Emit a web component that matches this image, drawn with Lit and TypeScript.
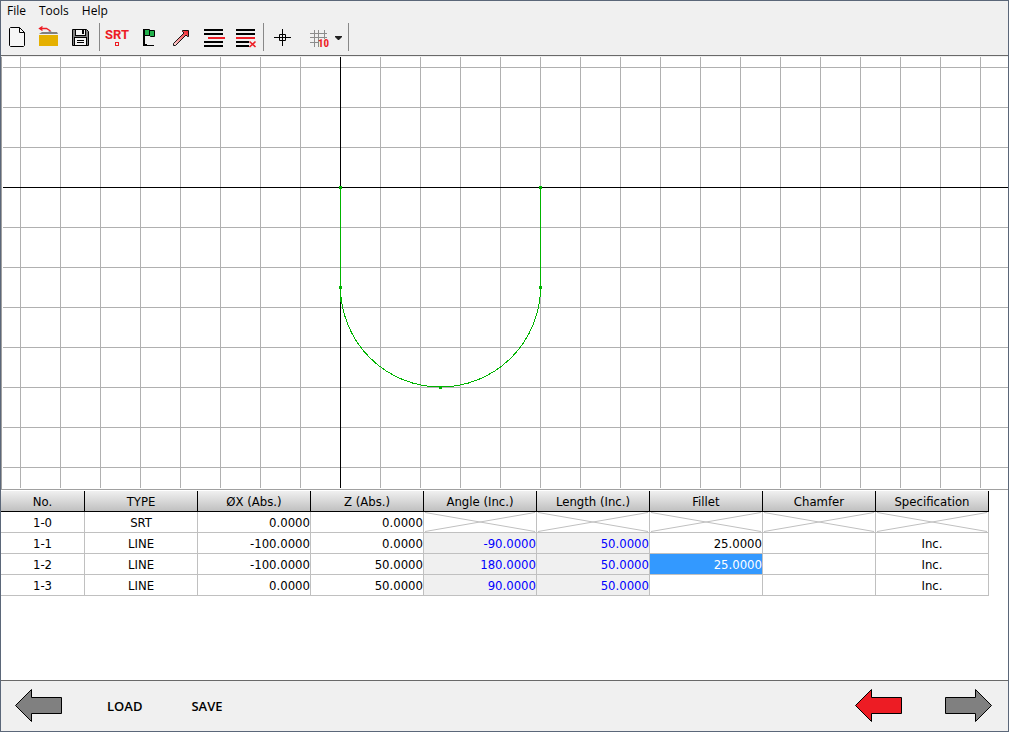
import { LitElement, html, svg, css } from "lit";
import { customElement, state } from "lit/decorators.js";

type Cell = string | null;
interface Row { id: string; type: string; values: Cell[]; spec: Cell; }

const columns = ["No.", "TYPE", "ØX (Abs.)", "Z (Abs.)", "Angle (Inc.)", "Length (Inc.)", "Fillet", "Chamfer", "Specification"];

const rows: Row[] = [
  { id: "1-0", type: "SRT", values: ["0.0000", "0.0000", null, null, null, null], spec: null },
  { id: "1-1", type: "LINE", values: ["-100.0000", "0.0000", "-90.0000", "50.0000", "25.0000", ""], spec: "Inc." },
  { id: "1-2", type: "LINE", values: ["-100.0000", "50.0000", "180.0000", "50.0000", "25.0000", ""], spec: "Inc." },
  { id: "1-3", type: "LINE", values: ["0.0000", "50.0000", "90.0000", "50.0000", "", ""], spec: "Inc." },
];

const icon = (body: unknown) => html`<svg width="32" height="32" viewBox="0 0 32 32" aria-hidden="true">${body}</svg>`;

const newIcon = svg`<path d="M9.5 5.5H18.5L23.5 10.5V23.5L22.5 24.5H9.5L8.5 23.5V6.5Z" fill="#f6f6f6" stroke="#000"/><path d="M18.5 5.5V10.5H23.5" fill="none" stroke="#000"/>`;
const openIcon = svg`<path d="M6 12L9 10H15L17 9L19 10H24L25 12Z" fill="#808080"/><rect x="6" y="13" width="19" height="11" fill="#e5b000"/><path d="M9.5 4.5L6.5 6.5L9.5 8.5M6.5 6.5H13.5L17.5 9" fill="none" stroke="#ed1c24" stroke-width="1.3"/>`;
const saveIcon = svg`<path d="M7.5 7.5H21.5L23.5 9.5V23.5H7.5Z" fill="#7f7f7f" stroke="#000"/><rect x="10.5" y="7.5" width="10" height="6" fill="#f4f4f4" stroke="#000"/><rect x="17" y="8" width="2" height="4"/><rect x="9.5" y="15.5" width="12" height="8" fill="#f4f4f4" stroke="#000"/><path d="M12 18.5H19M12 20.5H19" stroke="#000"/>`;
const startIcon = svg`<text class="srt" x="16" y="17" text-anchor="middle">SRT</text><rect x="14.5" y="20.5" width="3" height="3" fill="none" stroke="#ed1c24"/>`;
const flagIcon = svg`<path d="M10 7H12V22H14V23H21V24H10Z"/><path d="M11.5 7.5H16.5V8.5H21.5V14.5H17.5L16.5 13.5H11.5Z" fill="#22b14c" stroke="#000"/><path d="M16.5 8V14" stroke="#000"/>`;
const arrowIcon = svg`<defs><linearGradient id="shaft" x1="0" y1="1" x2="1" y2="0"><stop offset="0" stop-color="#ffdede"/><stop offset="1" stop-color="#ed1c24"/></linearGradient></defs><path d="M8.5 21.5L19 11L17.5 9.5V8.5H23.5V14.5H22.5L21 13L10.5 23.5H8.5Z" fill="url(#shaft)" stroke="#000" stroke-width="0.9"/>`;
const insertIcon = svg`<path d="M7 8H26M7 12H26M7 20H26M7 24H26" stroke="#000" stroke-width="2"/><path d="M11 16H28" stroke="#ed1c24" stroke-width="2"/>`;
const removeIcon = svg`<path d="M7 8H26M7 12H26M7 20H20M7 24H20" stroke="#000" stroke-width="2"/><path d="M7 16H26" stroke="#ed1c24" stroke-width="2"/><path d="M20.5 19.5L26.5 25M26.5 19.5L20.5 25" stroke="#ed1c24" stroke-width="1.6"/>`;
const crossIcon = svg`<path d="M7 15.5H24M15.5 7V24M12.5 12.5H18.5V18.5H12.5Z" fill="none" stroke="#000"/>`;

@customElement("app-root")
export class AppRoot extends LitElement {
  @state() private selected = "2-4";

  static styles = css`
    :host {
      display: flex; flex-direction: column; box-sizing: border-box; height: 100vh;
      border: 1px solid #5b6779; background: #f0f0f0; color: #000;
      font: 12px/20px "Open Sans", "Noto Sans", sans-serif;
    }
    button { appearance: none; border: 0; padding: 0; margin: 0; background: none; font: inherit; color: inherit; }
    svg { display: block; }
    .menu { display: flex; gap: 13px; padding: 0 6px; height: 20px; }
    .tools { display: flex; height: 34px; border-bottom: 1px solid #696969; }
    .sep { width: 1px; height: 28px; margin: 2px 1px 0 2px; background: #888; }
    .srt { font: bold 13px Roboto, sans-serif; fill: #ed1c24; }
    .ten { font: bold 11px "Roboto Condensed", "Open Sans Condensed", Roboto, sans-serif; fill: #ed1c24; }
    .gap { width: 2px; }
    .canvas { flex: 1; min-height: 200px; overflow: hidden; background: #fff; border: solid #a0a0a0; border-width: 0 0 1px 1px; margin-top: 1px; padding: 0 0 1px 1px; }
    .plot { width: 100%; height: 100%; }
    .list { box-sizing: border-box; height: 190px; overflow: auto; padding-top: 1px; background: #fff; font: 13px/18px "DejaVu Sans Condensed", "DejaVu Sans", sans-serif; }
    table { table-layout: fixed; width: 988px; border-collapse: separate; border-spacing: 0; }
    .first { width: 84px; }
    th, td { box-sizing: border-box; height: 21px; padding: 2px 0 0; border-right: 1px solid #c0c0c0; border-bottom: 1px solid #c0c0c0; text-align: center; font-weight: normal; }
    th { border-color: #000; background: linear-gradient(#f0f0f0, #c0c0c0); }
    .empty { padding: 0; }
    .num { text-align: right; }
    .calc { background: #f0f0f0; color: #00f; }
    .sel { background: #3399ff; color: #fff; }
    .void { width: 100%; height: 20px; }
    .foot { display: flex; align-items: center; height: 50px; padding: 0 15px 0 14px; border-top: 1px solid #696969; }
    .text { font-weight: 600; font-size: 13px; }
    .load { margin-left: 44px; }
    .save { margin-left: 49px; }
    .fill { flex: 1; }
    .next { margin-left: 42px; }
  `;

  private cell(value: Cell, r: number, c: number) {
    if (value === null) {
      return html`<td class="empty"><svg class="void" viewBox="0 0 112 20" preserveAspectRatio="none"><path d="M1 0.5L111 19.5M111 0.5L1 19.5" stroke="#c0c0c0"/></svg></td>`;
    }
    const key = `${r}-${c}`;
    const kind = key === this.selected ? "num sel" : c === 2 || c === 3 ? "num calc" : "num";
    return html`<td class=${kind} @click=${() => (this.selected = key)}>${value}</td>`;
  }

  private arrow(fill: string, right = false) {
    return html`<svg width="48" height="34" viewBox="0 0 48 34" aria-hidden="true">
      <path transform=${right ? "matrix(-1 0 0 1 47 0)" : ""} d="M0.5 16.5L16.5 0.5V8.5H46.5V24.5H16.5V32.5Z" fill=${fill} stroke="#000"/></svg>`;
  }

  private tool(label: string, body: unknown) {
    return html`<button aria-label=${label}>${icon(body)}</button>`;
  }

  render() {
    return html`
      <nav class="menu"><button>File</button><button>Tools</button><button>Help</button></nav>
      <div class="tools">
        ${this.tool("New", newIcon)}${this.tool("Open", openIcon)}${this.tool("Save", saveIcon)}
        <span class="sep"></span>
        ${this.tool("Start point", startIcon)}${this.tool("Flag", flagIcon)}${this.tool("Line", arrowIcon)}${this.tool("Insert row", insertIcon)}${this.tool("Delete row", removeIcon)}
        <span class="sep"></span><span class="gap"></span>
        ${this.tool("Origin", crossIcon)}
        <span class="gap"></span><span class="gap"></span>
        <button aria-label="Grid size"><svg width="28" height="32" viewBox="0 0 28 32">
          <path d="M11.5 8V25M15.5 8V25M21.5 8V25M7 11.5H24M7 15.5H24M7 20.5H24" stroke="#8c8c8c"/>
          <rect x="16" y="17" width="10" height="9" fill="#f0f0f0"/>
          <text class="ten" x="15" y="25">10</text></svg></button>
        <button aria-label="Grid options"><svg width="15" height="32" viewBox="0 0 15 32"><path d="M4 14H11V15L8 18H7L4 15Z" fill="#222"/></svg></button>
        <span class="sep"></span>
      </div>
      <main class="canvas">
        <svg class="plot" shape-rendering="crispEdges" role="img" aria-label="Profile">
          <defs><pattern id="grid" x="17" y="10" width="40" height="40" patternUnits="userSpaceOnUse">
            <path d="M0.5 0V40M0 0.5H40" stroke="#b0b0b0"/></pattern></defs>
          <rect width="100%" height="100%" fill="url(#grid)"/>
          <rect x="337" width="1" height="100%"/>
          <rect y="130" width="100%" height="1"/>
          <g fill="none" stroke="#00b400"><path d="M337.5 130V245M537.5 130V230"/><path d="M337.5 230A100 100 0 0 0 537.5 230"/></g>
          <g fill="#00b400">${[[337, 130], [537, 130], [337, 230], [537, 230], [437, 330]].map(([x, y]) => svg`<rect x=${x - 1} y=${y - 1} width="3" height="3"/>`)}</g>
        </svg>
      </main>
      <section class="list">
        <table>
          <thead><tr>${columns.map((c, i) => html`<th class=${i ? "" : "first"}>${c}</th>`)}</tr></thead>
          <tbody>${rows.map((row, r) => html`<tr><td>${row.id}</td><td>${row.type}</td>${row.values.map((v, c) => this.cell(v, r, c))}${row.spec === null ? this.cell(null, r, 6) : html`<td>${row.spec}</td>`}</tr>`)}</tbody>
        </table>
      </section>
      <footer class="foot">
        <button aria-label="Back">${this.arrow("#808080")}</button>
        <button class="text load">LOAD</button>
        <button class="text save">SAVE</button>
        <span class="fill"></span>
        <button aria-label="Previous">${this.arrow("#ed1c24")}</button>
        <button class="next" aria-label="Next">${this.arrow("#808080", true)}</button>
      </footer>`;
  }
}
